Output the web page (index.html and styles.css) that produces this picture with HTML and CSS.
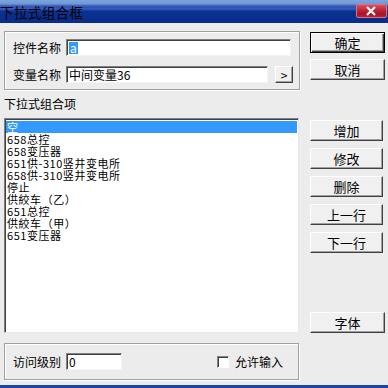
FILE: index.html
```html
<!DOCTYPE html>
<html>
<head>
<meta charset="utf-8">
<link rel="stylesheet" href="styles.css">
</head>
<body>
<div class="window">
  <div class="titlebar">
    <span class="title">下拉式组合框</span>
    <div class="close">
      <svg width="31" height="14" viewBox="0 0 31 14"><path d="M11 3 L19 11 M19 3 L11 11" stroke="#fff" stroke-width="2.2"/></svg>
    </div>
  </div>
  <div class="content">
    <div class="left">
      <div class="group g1">
        <div class="row">
          <span class="lbl">控件名称</span>
          <div class="input w1"><span class="sel">a</span></div>
        </div>
        <div class="row">
          <span class="lbl">变量名称</span>
          <div class="input w2">中间变量36</div>
          <div class="btn small">&gt;</div>
        </div>
      </div>
      <div class="caption">下拉式组合项</div>
      <div class="listbox">
        <div class="item selected">空</div>
        <div class="item">658总控</div>
        <div class="item">658变压器</div>
        <div class="item">651供-310竖井变电所</div>
        <div class="item">658供-310竖井变电所</div>
        <div class="item">停止</div>
        <div class="item">供絞车（乙）</div>
        <div class="item">651总控</div>
        <div class="item">供絞车（甲）</div>
        <div class="item">651变压器</div>
      </div>
      <div class="group g2">
        <span class="lbl">访问级别</span>
        <div class="input w3">0</div>
        <span class="check"></span>
        <span class="lbl">允许输入</span>
      </div>
    </div>
    <div class="right">
      <div class="btn def">确定</div>
      <div class="btn b-cancel">取消</div>
      <div class="btn b-add">增加</div>
      <div class="btn b-step">修改</div>
      <div class="btn b-step">删除</div>
      <div class="btn b-step">上一行</div>
      <div class="btn b-step">下一行</div>
      <div class="btn b-font">字体</div>
    </div>
  </div>
  <div class="bottomline"></div>
</div>
</body>
</html>
```

FILE: styles.css
```css
* { box-sizing: border-box; }
html, body { margin: 0; padding: 0; }
body {
  width: 388px;
  height: 388px;
  overflow: hidden;
  background: #ececec;
  font-family: "Noto Sans CJK SC", "Liberation Sans", sans-serif;
  font-size: 12px;
  color: #000;
}
.window { width: 388px; height: 388px; display: flex; flex-direction: column; }
.titlebar {
  height: 23px;
  flex: none;
  display: flex;
  align-items: center;
  justify-content: space-between;
  background: linear-gradient(#7ea4dc 0px, #6e98d6 4px, #4a70c8 5px, #2c4fb0 7px, #3a5ec0 9px, #0c3290 11px, #062c8c 23px);
}
.title { font-size: 13.5px; line-height: 14px; margin-top: 1px; letter-spacing: 0.4px; }
.close {
  width: 31px; height: 14px;
  margin-right: 1px;
  margin-top: -1px;
  border: 1px solid #e07080;
  border-radius: 2px;
  background: linear-gradient(#d85060 0px, #c02838 5px, #a81424 9px, #c03040 14px);
  display: flex;
}
.close svg { display: block; margin: -1px; }
.content { flex: 1; display: flex; padding-left: 4px; }
.left { width: 296px; display: flex; flex-direction: column; }
.right { margin-left: 10px; width: 75px; display: flex; flex-direction: column; padding-top: 9px; }

.group {
  border: 1px solid #a0a0a0;
  box-shadow: inset 1px 1px #fff, 1px 1px #fff;
}
.g1 { margin-top: 8px; height: 59px; padding: 7px 0 0 8px; display: flex; flex-direction: column; gap: 10px; }
.row { display: flex; align-items: center; height: 17px; }
.lbl { line-height: 12px; margin-right: 5px; }
.input {
  height: 17px;
  background: #fff;
  border-top: 1px solid #808080;
  border-left: 1px solid #808080;
  border-right: 1px solid #f4f4f4;
  border-bottom: 1px solid #f4f4f4;
  box-shadow: inset 1px 1px #404040;
  padding: 2px 0 0 2px;
  line-height: 12px;
  white-space: nowrap;
}
.w1 { width: 225px; }
.w2 { width: 202px; }
.w3 { width: 56px; }
.sel { background: #3399ff; color: #fff; display: inline-block; padding: 0 1px; }
.btn {
  height: 21px;
  background: #f0f0f0;
  border: 1px solid;
  border-color: #fff #404040 #404040 #fff;
  box-shadow: inset -1px -1px #a0a0a0;
  display: flex;
  align-items: center;
  justify-content: center;
  font-size: 13px;
  line-height: 13px;
}
.small { width: 18px; height: 17px; margin-left: 7px; font-size: 12px; }
.def { border: 1px solid #000; box-shadow: inset 1px 1px #fff, inset -1px -1px #404040, inset -2px -2px #a0a0a0; }
.b-cancel { margin-top: 6px; }
.b-add { margin-top: 40px; width: 73px; }
.b-step { margin-top: 7px; width: 73px; }
.b-font { margin-top: 59px; }

.caption { margin-top: 8px; line-height: 12px; height: 12px; }
.listbox {
  margin-top: 8px;
  height: 215px;
  width: 295px;
  background: #fff;
  border-top: 1px solid #808080;
  border-left: 1px solid #808080;
  border-right: 1px solid #e8e8e8;
  border-bottom: 1px solid #e8e8e8;
  box-shadow: inset 1px 1px #404040;
  padding: 2px 1px 0 1px;
}
.item { height: 12px; line-height: 12px; font-size: 11px; letter-spacing: 0.55px; padding-left: 1px; white-space: nowrap; }
.selected { background: #3399ff; color: #fff; }
.g2 { margin-top: 10px; height: 37px; width: 295px; display: flex; align-items: center; padding-left: 8px; }
.check {
  width: 12px; height: 12px;
  margin-left: 95px; margin-right: 6px;
  background: #fff;
  border-top: 1px solid #808080;
  border-left: 1px solid #808080;
  border-right: 1px solid #fff;
  border-bottom: 1px solid #fff;
  box-shadow: inset 1px 1px #404040;
}
.bottomline { height: 3px; background: #1a44a8; flex: none; }
```
